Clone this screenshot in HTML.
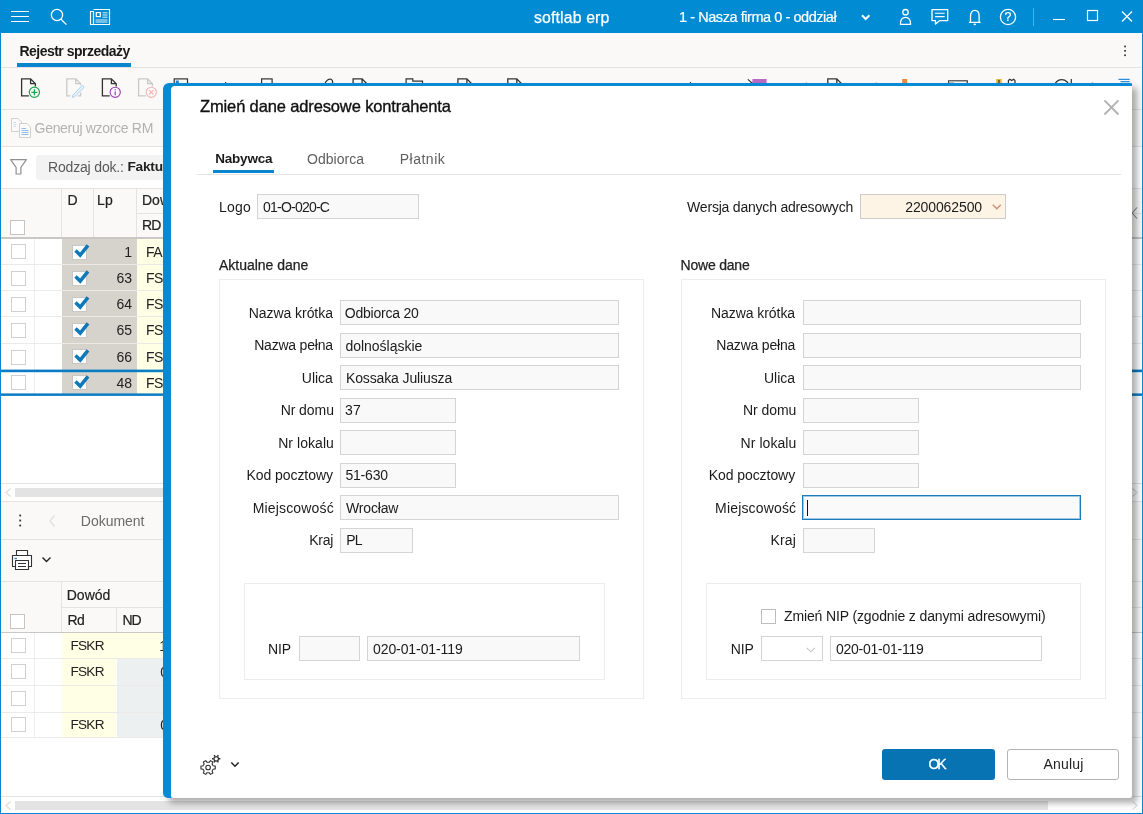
<!DOCTYPE html>
<html lang="pl">
<head>
<meta charset="utf-8">
<title>softlab erp</title>
<style>
*{box-sizing:border-box;margin:0;padding:0}
html,body{width:1143px;height:814px;overflow:hidden;background:#fff}
body{font-family:"Liberation Sans",sans-serif;font-size:14px;color:#1b1b1b;position:relative}
.abs{position:absolute}
.t{position:absolute;white-space:nowrap;line-height:16px;height:16px}
.r{text-align:right}
.b{font-weight:bold}
#win{will-change:transform;position:absolute;left:0;top:0;width:1143px;height:814px;background:#fff;overflow:hidden}
#frame{position:absolute;left:0;top:0;width:1143px;height:814px;border:1px solid #0a86cf;border-top:none;pointer-events:none;z-index:50}
#titlebar{position:absolute;left:0;top:0;width:1143px;height:33px;background:#008bd3;color:#fff}
.hl{position:absolute;height:1px;background:#e4e3e1}
.vl{position:absolute;width:1px;background:#e4e3e1}
.bg{position:absolute}
.cb{position:absolute;width:15px;height:15px;border:1px solid #c4c4c4;background:#fff}
/* dialog */
#dlg{position:absolute;left:163px;top:83px;width:969px;height:714.500px;background:#058ad3;border-radius:6px 1px 3px 5px;z-index:20;box-shadow:5px 5px 6px rgba(0,0,0,.32)}
#dlg i{position:absolute;left:7.500px;top:3px;right:0;bottom:0;background:#fff;border-radius:4px 0 2px 2px;display:block}
.inp{position:absolute;height:25px;border:1px solid #d4d4d4;background:#f9f9f9;line-height:25px;padding-left:5px;white-space:nowrap;overflow:hidden}
.grp{position:absolute;border:1px solid #ececec}
</style>
</head>
<body>
<div id="win">
<!-- BACKGROUND APP -->
<div id="titlebar">
<svg class="abs" style="left:0;top:0" width="1143" height="33" viewBox="0 0 1143 33" fill="none" stroke="#fff" stroke-width="1.3">
<!-- hamburger -->
<path d="M11 11.5H29M11 16.5H29M11 21.5H29" stroke-width="1.2"/>
<!-- search -->
<circle cx="57" cy="15" r="5.6"/><path d="M61 19.2L66.5 24.6"/>
<!-- news -->
<path d="M93.5 9.5H109.5V24.5H90.5V11.5H93.5V24.5" stroke-width="1.2"/>
<rect x="96.3" y="12.6" width="4" height="4" stroke-width="1.2"/>
<path d="M102.5 12.8H107.5M102.5 15H107.5M102.5 17.2H107.5M95.5 20H107.5M95.5 22H107.5" stroke-width="0.9"/>
<!-- chevron -->
<path d="M862 15.300L865.700 19L869.400 15.300" stroke-width="2"/>
<!-- person -->
<circle cx="905.5" cy="12.2" r="2.7"/><path d="M900.400 24.300C900.400 19.500 902.300 17.300 905.500 17.300C908.700 17.300 910.600 19.500 910.600 24.300Z" stroke-linejoin="round"/>
<!-- chat -->
<path d="M932 9.7H947.7V20.7H939.5L935.5 24V20.7H932Z" stroke-linejoin="round"/><path d="M935 13.3H944.7M935 16.6H944.7" stroke-width="1.1"/>
<!-- bell -->
<path d="M969 22.300H980.600M970.500 22.300V16C970.500 12.600 972.300 10.300 974.800 10.300C977.300 10.300 979.100 12.600 979.100 16V22.300" stroke-linejoin="round"/><path d="M973.600 24.400H976" stroke-width="1.400"/>
<!-- help -->
<circle cx="1008" cy="17" r="7.6"/>
<!-- sep -->
<path d="M1033.5 8V26" stroke="#4fb0e3" stroke-width="1"/>
<!-- min max close -->
<path d="M1053 19.5H1065" stroke-width="1.1"/>
<rect x="1087.5" y="10.5" width="10" height="10" stroke-width="1.2"/>
<path d="M1122 11.5L1132 21.5M1132 11.5L1122 21.5" stroke-width="1.2"/>
</svg>
<div class="t" style="left:1003.500px;top:9.300px;width:9px;font-size:12.500px;text-align:center;color:#fff;-webkit-text-stroke:0.200px #fff">?</div>
<div class="t" id="t_soft" style="left:534.0px;top:9.500px;font-size:15.800px;color:#fff;-webkit-text-stroke:0.250px #fff;letter-spacing:0.150px">softlab erp</div>
<div class="t" id="t_firma" style="-webkit-text-stroke:0.200px #fff;left:679px;top:9px;font-size:14.5px;color:#fff;letter-spacing:-0.443px">1 - Nasza firma 0 - oddział</div>
</div>
<div id="bgapp">
<!-- tab bar -->
<div class="bg" style="left:0;top:33px;width:1143px;height:76px;background:#faf9f8"></div>
<div class="t b" id="t_rej" style="margin-top:0;left:19.4px;top:43px;font-size:14px;color:#1a1a1a;letter-spacing:-0.511px">Rejestr sprzedaży</div>
<div class="bg" style="left:17px;top:63px;width:114px;height:4px;background:#0a86cf"></div>
<div class="hl" style="left:0;top:67px;width:1143px"></div>
<svg class="abs" style="left:1120px;top:44px" width="10" height="14" viewBox="0 0 10 14" fill="#333"><rect x="4.2" y="1.6" width="1.7" height="1.7"/><rect x="4.2" y="6" width="1.7" height="1.7"/><rect x="4.2" y="10.4" width="1.7" height="1.7"/></svg>
<!-- toolbar row 1 -->
<svg id="tb1" class="abs" style="left:0;top:68px" width="1143" height="41" viewBox="0 68 1143 41" fill="none" stroke="#333" stroke-width="1.2"><path d="M28.9 95.8H21.6V78.9H30.6L35.4 83.7V86.5M30.6 78.9V83.7H35.4" stroke="#333" stroke-width="1.300"/><circle cx="34.4" cy="92.3" r="5.100" stroke="#16a94c" stroke-width="1.200" fill="#faf9f8"/><path d="M31.4 92.3H37.4M34.4 89.3V95.3" stroke="#16a94c" stroke-width="1.300"/><path d="M70.3 95.8H66.8V78.9H75.8L80.6 83.7V84.9M75.8 78.9V83.7H80.6M80.6 92.4V95.8H77.8" stroke="#c9c9c9" stroke-width="1.300"/><path d="M82.300 85.300L84.200 87.200L74.600 96.700L72.400 97.400L73 95.100Z" stroke="#a9d0ee" stroke-width="1" fill="#eaf4fb" stroke-linejoin="round"/><path d="M109.7 95.8H102.4V78.9H111.4L116.2 83.7V86.5M111.4 78.9V83.7H116.2" stroke="#333" stroke-width="1.300"/><circle cx="115.2" cy="92.3" r="5.100" stroke="#9a3fb0" stroke-width="1.100" fill="#faf9f8"/><path d="M115.2 91.5V95.3" stroke="#9a3fb0" stroke-width="1.200"/><circle cx="115.2" cy="89.7" r="0.700" fill="#9a3fb0" stroke="none"/><path d="M145.9 95.8H138.6V78.9H147.6L152.4 83.7V86.5M147.6 78.9V83.7H152.4" stroke="#c9c9c9" stroke-width="1.300"/><circle cx="151.3" cy="92.3" r="5.100" stroke="#f3b4b4" stroke-width="1.100" fill="#faf9f8"/><path d="M149.10000000000002 90.1L153.5 94.5M153.5 90.1L149.10000000000002 94.5" stroke="#f3b4b4" stroke-width="1.100"/><rect x="174.200" y="78.900" width="13.300" height="14" stroke="#333" stroke-width="1.200"/><rect x="175.800" y="80.500" width="3" height="4" fill="#2a7fd0" stroke="none"/><rect x="225.0" y="82" width="1.200" height="3" fill="#444" stroke="none"/><rect x="689.9" y="82" width="1.200" height="3" fill="#444" stroke="none"/><rect x="805.8" y="82" width="1.200" height="3" fill="#ccc" stroke="none"/><rect x="875.8" y="82" width="1.200" height="3" fill="#ccc" stroke="none"/><rect x="1091.9" y="82" width="1.200" height="3" fill="#bbb" stroke="none"/><rect x="261.600" y="78.900" width="10.500" height="12" stroke="#333" stroke-width="1.200"/><path d="M324.800 84C326 80.500 329 78.600 331 79.300C332.500 79.900 332.800 81.500 332.600 83" stroke="#333" stroke-width="1.200"/><path d="M353.1 95.9V78.9H362.1L366.9 83.7V95.9M362.1 78.9V83.7H366.9" stroke="#333" stroke-width="1.300"/><path d="M457.9 95.9V78.9H466.9L471.7 83.7V95.9M466.9 78.9V83.7H471.7" stroke="#333" stroke-width="1.300"/><path d="M507.8 95.9V78.9H516.8L521.6 83.7V95.9M516.8 78.9V83.7H521.6" stroke="#333" stroke-width="1.300"/><path d="M827.8 95.9V78.9H836.8L841.6 83.7V95.9M836.8 78.9V83.7H841.6" stroke="#333" stroke-width="1.300"/><path d="M406.100 92V78.900H412.800V81.200H422.500V84" stroke="#333" stroke-width="1.200"/><rect x="752.400" y="79" width="14.200" height="10" fill="#b86ac6" stroke="none"/><path d="M747.800 79.300L752.600 83.500" stroke="#333" stroke-width="1.100"/><rect x="902.200" y="79" width="5" height="9" fill="#f0883a" stroke="none"/><rect x="948.600" y="80.800" width="18.700" height="10" stroke="#333" stroke-width="1.100"/><rect x="949" y="81.200" width="5" height="8" fill="#bdbdbd" stroke="none"/><rect x="996.200" y="79" width="5.500" height="9" fill="#e9b43a" stroke="none"/><rect x="998.200" y="80" width="1.500" height="6" fill="#5a4a2a" stroke="none"/><path d="M1008.400 84V80.500L1009.800 79.300L1011.700 80.500L1013.600 79.300L1015 80.500V84" stroke="#333" stroke-width="1.200"/><circle cx="1061.700" cy="87" r="7.400" stroke="#333" stroke-width="1.200"/><path d="M1071.300 79V86" stroke="#333" stroke-width="1.200"/><path d="M1118.500 79.300H1129.700M1120.500 81.700H1129.700" stroke="#2d8fd8" stroke-width="1.300"/></svg>
<div class="hl" style="left:0;top:109px;width:1143px"></div>
<!-- toolbar row 2 -->
<div class="bg" style="left:0;top:110px;width:1143px;height:36px;background:#faf9f8"></div>
<svg class="abs" style="left:10px;top:116px" width="22" height="24" viewBox="10 116 22 24" fill="#fbfbfb" stroke="#d0d0d0" stroke-width="1">
<path d="M11.5 118.5H18L21.5 122V131.500H11.5Z"/><path d="M13.500 122.500H16M13.500 124.500H16M13.500 126.500H16" stroke="#c9dcee"/>
<path d="M19.500 123.500H27L30.500 127V137.500H19.500Z"/><path d="M21.500 128.500H26M21.500 130.500H28.500M21.500 132.500H28.500M21.500 134.500H28.500" stroke="#8fbbe6"/>
</svg>
<div class="t" id="t_gen" style="left:34.6px;top:120px;font-size:14px;color:#b3b2b1;letter-spacing:-0.313px">Generuj wzorce RM</div>
<div class="hl" style="left:0;top:146px;width:1143px"></div>
<!-- filter row -->
<svg class="abs" style="left:8px;top:157px" width="22" height="20" viewBox="8 157 22 20" fill="none" stroke="#909090" stroke-width="1.200" stroke-linejoin="round"><path d="M10.600 159.700H26.400L20.900 167.300V174H16.100V167.300Z"/></svg>
<div class="bg" style="left:36px;top:155px;width:200px;height:25px;background:#f3f3f3;border-radius:3px"></div>
<div class="t" id="t_rodz" style="left:48.0px;top:159px;font-size:14px;color:#5a5a5a;letter-spacing:-0.171px">Rodzaj dok.:</div>
<div class="t b" id="t_fakt" style="left:127.500px;top:159px;font-size:13.700px;color:#222;letter-spacing:-0.250px">Faktury</div>
<div class="hl" style="left:0;top:188px;width:1143px"></div>
<!-- grid 1 header -->
<div class="bg" style="left:0;top:189px;width:1143px;height:48px;background:#faf9f8"></div>
<div class="vl" style="left:61px;top:189px;height:48px"></div>
<div class="vl" style="left:93px;top:189px;height:48px"></div>
<div class="vl" style="left:136px;top:189px;height:48px"></div>
<div class="hl" style="left:137px;top:213px;width:1006px"></div>
<div class="t" style="left:67.500px;top:192px;color:#222;-webkit-text-stroke:0.200px #222">D</div>
<div class="t" id="t_lp" style="-webkit-text-stroke:0.200px #222;left:97.0px;top:192px;color:#222;letter-spacing:0.300px">Lp</div>
<div class="t" id="t_dow" style="-webkit-text-stroke:0.200px #222;left:142px;top:192px;color:#222">Dowód</div>
<div class="t" id="t_rd" style="-webkit-text-stroke:0.200px #222;left:142px;top:217px;color:#222;letter-spacing:-0.900px">RD</div>
<div class="cb" style="left:10px;top:220px"></div>
<div class="bg" style="left:0;top:237px;width:1143px;height:2px;background:#c9c8c6"></div>
<!-- grid 1 rows -->
<div id="g1">
<div class="bg" style="left:62px;top:239px;width:75px;height:156px;background:#d6d2cc"></div>
<div class="bg" style="left:137px;top:239px;width:993px;height:156px;background:#ffffe5"></div>
<div class="vl" style="left:34px;top:239px;height:156px;background:#efeeec"></div>
<div class="hl" style="left:0;top:264px;width:1143px;background:#eceae7"></div>
<div class="hl" style="left:0;top:290px;width:1143px;background:#eceae7"></div>
<div class="hl" style="left:0;top:316px;width:1143px;background:#eceae7"></div>
<div class="hl" style="left:0;top:342.5px;width:1143px;background:#eceae7"></div>
<div class="cb" style="left:11px;top:244.3px;border-color:#d0d0d0"></div>
<div class="cb" style="left:72px;top:244.7px;width:15px;height:15px;border-color:#c9c7c4"></div>
<svg class="abs" style="left:72px;top:242.3px" width="20" height="18" viewBox="0 0 20 18" fill="none" stroke="#0d79ba" stroke-width="3.500"><path d="M3.500 8.600L8.200 13.100L16 3.300"/></svg>
<div class="t r" style="left:96px;width:36px;top:244.3px;color:#222">1</div>
<div class="t" style="left:146px;top:244.3px;color:#222;letter-spacing:-0.600px">FA</div>
<div class="cb" style="left:11px;top:270.5px;border-color:#d0d0d0"></div>
<div class="cb" style="left:72px;top:270.7px;width:15px;height:15px;border-color:#c9c7c4"></div>
<svg class="abs" style="left:72px;top:268.3px" width="20" height="18" viewBox="0 0 20 18" fill="none" stroke="#0d79ba" stroke-width="3.500"><path d="M3.500 8.600L8.200 13.100L16 3.300"/></svg>
<div class="t r" style="left:96px;width:36px;top:270.3px;color:#222">63</div>
<div class="t" style="left:146px;top:270.3px;color:#222;letter-spacing:-0.600px">FS</div>
<div class="cb" style="left:11px;top:297px;border-color:#d0d0d0"></div>
<div class="cb" style="left:72px;top:296.7px;width:15px;height:15px;border-color:#c9c7c4"></div>
<svg class="abs" style="left:72px;top:294.3px" width="20" height="18" viewBox="0 0 20 18" fill="none" stroke="#0d79ba" stroke-width="3.500"><path d="M3.500 8.600L8.200 13.100L16 3.300"/></svg>
<div class="t r" style="left:96px;width:36px;top:296.3px;color:#222">64</div>
<div class="t" style="left:146px;top:296.3px;color:#222;letter-spacing:-0.600px">FS</div>
<div class="cb" style="left:11px;top:323.2px;border-color:#d0d0d0"></div>
<div class="cb" style="left:72px;top:322.8px;width:15px;height:15px;border-color:#c9c7c4"></div>
<svg class="abs" style="left:72px;top:320.4px" width="20" height="18" viewBox="0 0 20 18" fill="none" stroke="#0d79ba" stroke-width="3.500"><path d="M3.500 8.600L8.200 13.100L16 3.300"/></svg>
<div class="t r" style="left:96px;width:36px;top:322.4px;color:#222">65</div>
<div class="t" style="left:146px;top:322.4px;color:#222;letter-spacing:-0.600px">FS</div>
<div class="cb" style="left:11px;top:349.6px;border-color:#d0d0d0"></div>
<div class="cb" style="left:72px;top:348.9px;width:15px;height:15px;border-color:#c9c7c4"></div>
<svg class="abs" style="left:72px;top:346.5px" width="20" height="18" viewBox="0 0 20 18" fill="none" stroke="#0d79ba" stroke-width="3.500"><path d="M3.500 8.600L8.200 13.100L16 3.300"/></svg>
<div class="t r" style="left:96px;width:36px;top:348.5px;color:#222">66</div>
<div class="t" style="left:146px;top:348.5px;color:#222;letter-spacing:-0.600px">FS</div>
<div class="cb" style="left:11px;top:375.2px;border-color:#d0d0d0"></div>
<div class="cb" style="left:72px;top:375.0px;width:15px;height:15px;border-color:#c9c7c4"></div>
<svg class="abs" style="left:72px;top:373.0px" width="20" height="18" viewBox="0 0 20 18" fill="none" stroke="#0d79ba" stroke-width="3.500"><path d="M3.500 8.600L8.200 13.100L16 3.300"/></svg>
<div class="t r" style="left:96px;width:36px;top:375.0px;color:#222">48</div>
<div class="t" style="left:146px;top:375.0px;color:#222;letter-spacing:-0.600px">FS</div>
<svg class="abs" style="left:0;top:368px" width="1143" height="30" viewBox="0 368 1143 30"><rect x="0" y="369.600" width="1143" height="2.600" fill="#0a7cc4"/><rect x="0" y="393.400" width="1143" height="2.500" fill="#0a7cc4"/></svg>

</div>
<!-- hscroll 1 -->
<div class="hl" style="left:0;top:483px;width:1143px"></div>
<div class="bg" style="left:15px;top:488px;width:1040px;height:9px;background:#e3e3e3"></div>
<svg class="abs" style="left:4px;top:487px" width="8" height="11" viewBox="0 0 8 11" fill="none" stroke="#dcdcdc" stroke-width="1.2"><path d="M6.500 1.500L2 5.500L6.500 9.500"/></svg>
<div class="hl" style="left:0;top:501px;width:1143px"></div>
<svg class="abs" style="left:1130px;top:206px" width="9" height="14" viewBox="0 0 9 14" fill="none" stroke="#8a8a8a" stroke-width="1.100"><path d="M7 1.500L2.200 7L7 12.500"/></svg>
<svg class="abs" style="left:1130px;top:600px" width="9" height="14" viewBox="0 0 9 14" fill="none" stroke="#8a8a8a" stroke-width="1.100"><path d="M7 1.500L2.200 7L7 12.500"/></svg>
<svg class="abs" style="left:1131px;top:487px" width="8" height="11" viewBox="0 0 8 11" fill="none" stroke="#dcdcdc" stroke-width="1.200"><path d="M1.500 1.500L6 5.500L1.500 9.500"/></svg>
<div class="bg" style="left:1131px;top:513px;width:2px;height:2px;background:#555"></div>
<!-- lower panel -->
<div class="bg" style="left:0;top:502px;width:1143px;height:130px;background:#faf9f8"></div>
<svg class="abs" style="left:15px;top:513px" width="10" height="16" viewBox="0 0 10 16" fill="#333"><rect x="4.300" y="1.600" width="1.800" height="1.800"/><rect x="4.300" y="6.600" width="1.800" height="1.800"/><rect x="4.300" y="11.600" width="1.800" height="1.800"/></svg>
<svg class="abs" style="left:47px;top:513px" width="10" height="16" viewBox="0 0 10 16" fill="none" stroke="#e0dfde" stroke-width="1.300"><path d="M7.500 2.500L3 8L7.500 13.500"/></svg>
<div class="t" id="t_dok" style="left:80.8px;top:512.500px;font-size:14px;color:#6b6b6b;letter-spacing:-0.014px">Dokument</div>
<div class="hl" style="left:0;top:539px;width:1143px"></div>
<svg class="abs" style="left:10px;top:548px" width="24" height="24" viewBox="10 548 24 24" fill="#fff" stroke="#333" stroke-width="1.100" stroke-linejoin="round">
<path d="M16.500 555V550.500H27.500V555"/><path d="M15.500 566.500H12.500V555.500H31.500V566.500H28.500"/><path d="M15.500 560.500H28.500V569.500H15.500Z"/><path d="M18 563.500H26M18 566.500H26" stroke-width="1"/><path d="M14.500 558.500H17" stroke="#2a7fd0" stroke-width="1.400"/>
</svg>
<svg class="abs" style="left:41px;top:555px" width="12" height="10" viewBox="0 0 12 10" fill="none" stroke="#222" stroke-width="1.400"><path d="M1.500 2.500L5.500 6.500L9.500 2.500"/></svg>
<div class="hl" style="left:0;top:581px;width:1143px"></div>
<!-- grid 2 header -->
<div class="vl" style="left:61px;top:582px;height:50px"></div>
<div class="vl" style="left:116px;top:608px;height:24px"></div>
<div class="hl" style="left:62px;top:607px;width:1081px"></div>
<div class="t" id="t_dow2" style="-webkit-text-stroke:0.200px #222;left:66.7px;top:587px;color:#222;letter-spacing:0.025px">Dowód</div>
<div class="t" id="t_rd2" style="-webkit-text-stroke:0.200px #222;left:67.500px;top:612px;color:#222;letter-spacing:-0.500px">Rd</div>
<div class="t" id="t_nd" style="-webkit-text-stroke:0.200px #222;left:122.500px;top:612px;color:#222;letter-spacing:-1.200px">ND</div>
<div class="cb" style="left:10px;top:613.500px"></div>
<div class="bg" style="left:0;top:632px;width:1143px;height:1px;background:#c9c8c6"></div>
<div id="g2">
<div class="bg" style="left:62px;top:633px;width:54px;height:104px;background:#ffffe5"></div>
<div class="bg" style="left:116px;top:633px;width:1014px;height:25px;background:#ffffe5"></div>
<div class="bg" style="left:117px;top:659px;width:1013px;height:78px;background:#ecf0f1"></div>
<div class="vl" style="left:34px;top:633px;height:104px;background:#efeeec"></div>
<div class="hl" style="left:0;top:658px;width:1143px;background:#eceae7"></div>
<div class="hl" style="left:0;top:684.5px;width:1143px;background:#eceae7"></div>
<div class="hl" style="left:0;top:711.600px;width:1143px;background:#eceae7"></div>
<div class="hl" style="left:0;top:737px;width:1143px;background:#eceae7"></div>
<div class="cb" style="left:11px;top:638.2px;border-color:#d0d0d0"></div>
<div class="t" style="left:70.500px;top:638.0px;color:#222;font-size:13.600px;letter-spacing:-0.750px">FSKR</div>
<div class="cb" style="left:11px;top:664.2px;border-color:#d0d0d0"></div>
<div class="t" style="left:70.500px;top:664.0px;color:#222;font-size:13.600px;letter-spacing:-0.750px">FSKR</div>
<div class="cb" style="left:11px;top:691.2px;border-color:#d0d0d0"></div>
<div class="cb" style="left:11px;top:716.7px;border-color:#d0d0d0"></div>
<div class="t" style="left:70.500px;top:716.5px;color:#222;font-size:13.600px;letter-spacing:-0.750px">FSKR</div>
</div>
<div class="t r" style="left:120px;width:47px;top:638px;color:#222">1</div>
<div class="t r" style="left:120px;width:48px;top:664px;color:#222">0</div>
<div class="t r" style="left:120px;width:48px;top:716.500px;color:#222">0</div>
<!-- hscroll 2 -->
<div class="hl" style="left:0;top:796px;width:1143px"></div>
<div class="bg" style="left:15px;top:801px;width:1033px;height:9px;background:#e3e3e3"></div>
<svg class="abs" style="left:4px;top:800px" width="8" height="11" viewBox="0 0 8 11" fill="none" stroke="#dcdcdc" stroke-width="1.200"><path d="M6.500 1.500L2 5.500L6.500 9.500"/></svg>
<svg class="abs" style="left:1131px;top:800px" width="8" height="11" viewBox="0 0 8 11" fill="none" stroke="#dcdcdc" stroke-width="1.200"><path d="M1.500 1.500L6 5.500L1.500 9.500"/></svg>
</div>
<!-- DIALOG -->
<div id="shadow"></div>
<div id="dlg"><i></i></div>
<div id="dc" style="position:absolute;left:0;top:0;width:1143px;height:814px;z-index:21">
<div class="t" id="t_title" style="-webkit-text-stroke:0.350px #111;left:200px;top:96px;font-size:16.500px;line-height:20px;height:20px;color:#111;letter-spacing:-0.135px">Zmień dane adresowe kontrahenta</div>
<svg class="abs" style="left:1102px;top:98px" width="18" height="18" viewBox="0 0 18 18" fill="none" stroke="#b2b2b2" stroke-width="1.900"><path d="M2.400 2.400L16.500 16.500M16.500 2.400L2.400 16.500"/></svg>
<div class="t b" id="t_nab" style="left:215.2px;top:151px;color:#1a1a1a;font-size:13.500px;letter-spacing:-0.203px">Nabywca</div>
<div class="t" id="t_odb" style="left:307.0px;top:151px;color:#5f5f5f;letter-spacing:0.039px">Odbiorca</div>
<div class="t" id="t_pla" style="left:399.7px;top:151px;color:#5f5f5f;letter-spacing:0.506px">Płatnik</div>
<div class="bg" style="left:213px;top:170px;width:61px;height:3px;background:#0a86cf"></div>
<div class="hl" style="left:197px;top:174px;width:924px;background:#e3e3e3"></div>
<div class="t" id="t_logo" style="left:219.1px;top:198.500px;letter-spacing:0.192px">Logo</div>
<div class="inp" style="left:257px;top:194px;width:162px"><span id="i_logo" style=";letter-spacing:-0.777px">01-O-020-C</span></div>
<div class="t" id="t_wer" style="left:687.1px;top:198.500px;letter-spacing:-0.208px">Wersja danych adresowych</div>
<div class="inp r" style="left:860px;top:194px;width:146px;background:#fdf4e6;border-color:#cdcbc8;padding-right:23px"><span id="i_wer" style=";letter-spacing:-0.111px">2200062500</span></div>
<svg class="abs" style="left:991px;top:202px" width="12" height="10" viewBox="0 0 12 10" fill="none" stroke="#d48c74" stroke-width="1.400"><path d="M1.800 2.800L5.800 6.800L9.800 2.800"/></svg>
<div class="t" id="t_akt" style="-webkit-text-stroke:0.250px #222;margin-top:-1px;left:219px;top:257.500px;color:#222;letter-spacing:-0.022px">Aktualne dane</div>
<div class="t" id="t_now" style="-webkit-text-stroke:0.250px #222;margin-top:-1px;left:680.5px;top:257.500px;color:#222;letter-spacing:-0.203px">Nowe dane</div>
<div class="grp" style="left:219px;top:279px;width:424.500px;height:420px"></div>
<div class="grp" style="left:681px;top:279px;width:425px;height:420px"></div>
<div class="t r" id="t_ank" style="left:222.4px;width:110.500px;top:304.5px;letter-spacing:-0.052px">Nazwa krótka</div>
<div class="inp" style="left:340px;top:300px;width:279px"><span id="i_nk" style="position:relative;left:-1.2px;letter-spacing:-0.220px">Odbiorca 20</span></div>
<div class="t r" id="t_bnk" style="left:685.1px;width:110px;top:304.5px;letter-spacing:-0.052px">Nazwa krótka</div>
<div class="inp" style="left:802.500px;top:300px;width:278.500px"></div>
<div class="t r" id="t_anp" style="left:222.4px;width:110.500px;top:337.0px;letter-spacing:-0.200px">Nazwa pełna</div>
<div class="inp" style="left:340px;top:332.5px;width:279px"><span id="i_np" style="position:relative;left:-0.6px;letter-spacing:-0.009px">dolnośląskie</span></div>
<div class="t r" id="t_bnp" style="left:685.1px;width:110px;top:337.0px;letter-spacing:-0.200px">Nazwa pełna</div>
<div class="inp" style="left:802.500px;top:332.5px;width:278.500px"></div>
<div class="t r" id="t_aul" style="left:222.4px;width:110.500px;top:369.5px;letter-spacing:0.000px">Ulica</div>
<div class="inp" style="left:340px;top:365px;width:279px"><span id="i_ul" style=";letter-spacing:-0.133px">Kossaka Juliusza</span></div>
<div class="t r" id="t_bul" style="left:685.1px;width:110px;top:369.5px;letter-spacing:0.000px">Ulica</div>
<div class="inp" style="left:802.500px;top:365px;width:278.500px"></div>
<div class="t r" id="t_and" style="left:223.4px;width:110.500px;top:402.0px;letter-spacing:-0.060px">Nr domu</div>
<div class="inp" style="left:340px;top:397.5px;width:116px"><span id="i_nd" style="top:-0.700px;position:relative;left:-0.900px;letter-spacing:0.100px">37</span></div>
<div class="t r" id="t_bnd" style="left:686.3px;width:110px;top:402.0px;letter-spacing:-0.060px">Nr domu</div>
<div class="inp" style="left:802.500px;top:397.5px;width:116.500px"></div>
<div class="t r" id="t_anl" style="left:223.4px;width:110.500px;top:434.5px;letter-spacing:0.050px">Nr lokalu</div>
<div class="inp" style="left:340px;top:430px;width:116px"></div>
<div class="t r" id="t_bnl" style="left:686.3px;width:110px;top:434.5px;letter-spacing:0.050px">Nr lokalu</div>
<div class="inp" style="left:802.500px;top:430px;width:116.500px"></div>
<div class="t r" id="t_akp" style="left:222.4px;width:110.500px;top:467.0px;letter-spacing:-0.065px">Kod pocztowy</div>
<div class="inp" style="left:340px;top:462.5px;width:116px"><span id="i_kp" style="top:-0.700px;position:relative;left:-0.6px;letter-spacing:-0.200px">51-630</span></div>
<div class="t r" id="t_bkp" style="left:685.1px;width:110px;top:467.0px;letter-spacing:-0.065px">Kod pocztowy</div>
<div class="inp" style="left:802.500px;top:462.5px;width:116.500px"></div>
<div class="t r" id="t_ami" style="left:223.4px;width:110.500px;top:499.5px;letter-spacing:0.170px">Miejscowość</div>
<div class="inp" style="left:340px;top:495px;width:279px"><span id="i_mi" style=";letter-spacing:-0.169px">Wrocław</span></div>
<div class="t r" id="t_bmi" style="left:686.3px;width:110px;top:499.5px;letter-spacing:0.170px">Miejscowość</div>
<div class="inp" style="left:802.400px;top:495px;width:278.600px;background:#fafafa;border:1px solid #1b7cbf;border-radius:0;box-shadow:inset 0 0 0 1px rgba(27,124,191,.4)"></div>
<div class="bg" style="left:806.900px;top:499.600px;width:1.300px;height:16.300px;background:#111"></div>
<div class="t r" id="t_akr" style="left:222.7px;width:110.500px;top:532.0px;letter-spacing:-0.237px">Kraj</div>
<div class="inp" style="left:340px;top:527.5px;width:72.5px"><span id="i_kr" style="top:-0.700px;position:relative;left:0.3px;letter-spacing:-0.800px">PL</span></div>
<div class="t r" id="t_bkr" style="left:685.9px;width:110px;top:532.0px;letter-spacing:0.096px">Kraj</div>
<div class="inp" style="left:802.500px;top:527.5px;width:72.500px"></div>
<div class="grp" style="left:244px;top:583px;width:361px;height:97px"></div>
<div class="grp" style="left:706px;top:583px;width:375px;height:97px"></div>
<div class="t" id="t_nip1" style="left:268px;top:641px;letter-spacing:-0.150px">NIP</div>
<div class="inp" style="left:298.500px;top:636px;width:61.500px"></div>
<div class="inp" style="left:367px;top:636px;width:213px"><span id="i_nip1" style=";letter-spacing:-0.088px">020-01-01-119</span></div>
<div class="cb" style="left:761px;top:609px;width:14.500px;height:14.500px;border-color:#bdbdbd"></div>
<div class="t" id="t_zm" style="margin-top:-0.700px;left:784px;top:608.500px;letter-spacing:-0.131px">Zmień NIP (zgodnie z danymi adresowymi)</div>
<div class="t" id="t_nip2" style="left:730.8px;top:641px;letter-spacing:-0.150px">NIP</div>
<div class="inp" style="left:761px;top:636px;width:61.500px;background:#fff"></div>
<svg class="abs" style="left:805px;top:644.500px" width="12" height="10" viewBox="0 0 12 10" fill="none" stroke="#c4c4c4" stroke-width="1.100"><path d="M1.800 2.800L5.800 6.800L9.800 2.800"/></svg>
<div class="inp" style="left:830px;top:636px;width:212px;background:#fff"><span id="i_nip2" style=";letter-spacing:-0.250px">020-01-01-119</span></div>
<div class="abs" id="ok" style="left:882px;top:749px;width:112.500px;height:31px;background:#0873b3;border-radius:3px;color:#fff;text-align:center;line-height:30px;font-size:14px"><span id="i_ok" style="-webkit-text-stroke:0.300px #fff;position:relative;left:-1.7px;letter-spacing:-2.000px">OK</span></div>
<div class="abs" id="an" style="left:1007px;top:749px;width:112px;height:31px;background:#fff;border:1px solid #b4b4b4;border-radius:3px;color:#222;text-align:center;line-height:28px;font-size:14px"><span id="i_an" style="position:relative;left:0.6px;letter-spacing:0.200px">Anuluj</span></div>
<svg class="abs" id="gear" style="left:199px;top:753px" width="24" height="24" viewBox="0 0 24 24" fill="none" stroke="#333" stroke-width="1.100"><path d="M14.13 12.83L16.27 13.13L16.27 15.87L14.13 16.17L13.06 18.02L13.87 20.03L11.50 21.39L10.17 19.69L8.03 19.69L6.70 21.39L4.33 20.03L5.14 18.02L4.07 16.17L1.93 15.87L1.93 13.13L4.07 12.83L5.14 10.98L4.33 8.97L6.70 7.61L8.03 9.31L10.17 9.31L11.50 7.61L13.87 8.97L13.06 10.98Z" stroke-linejoin="round"/><circle cx="9.1" cy="14.500" r="2.300"/><circle cx="17.200" cy="5.800" r="2.250" stroke-width="1.250"/><path d="M19.90 5.80L21.40 5.80M18.55 8.14L19.30 9.44M15.85 8.14L15.10 9.44M14.50 5.80L13.00 5.80M15.85 3.46L15.10 2.16M18.55 3.46L19.30 2.16" stroke-width="1.500"/></svg>
<svg class="abs" style="left:229px;top:760px" width="12" height="10" viewBox="0 0 12 10" fill="none" stroke="#222" stroke-width="1.500"><path d="M2.300 2.500L6 6.200L9.700 2.500"/></svg>
</div>
<div id="frame"></div>
</div>
</body>
</html>
